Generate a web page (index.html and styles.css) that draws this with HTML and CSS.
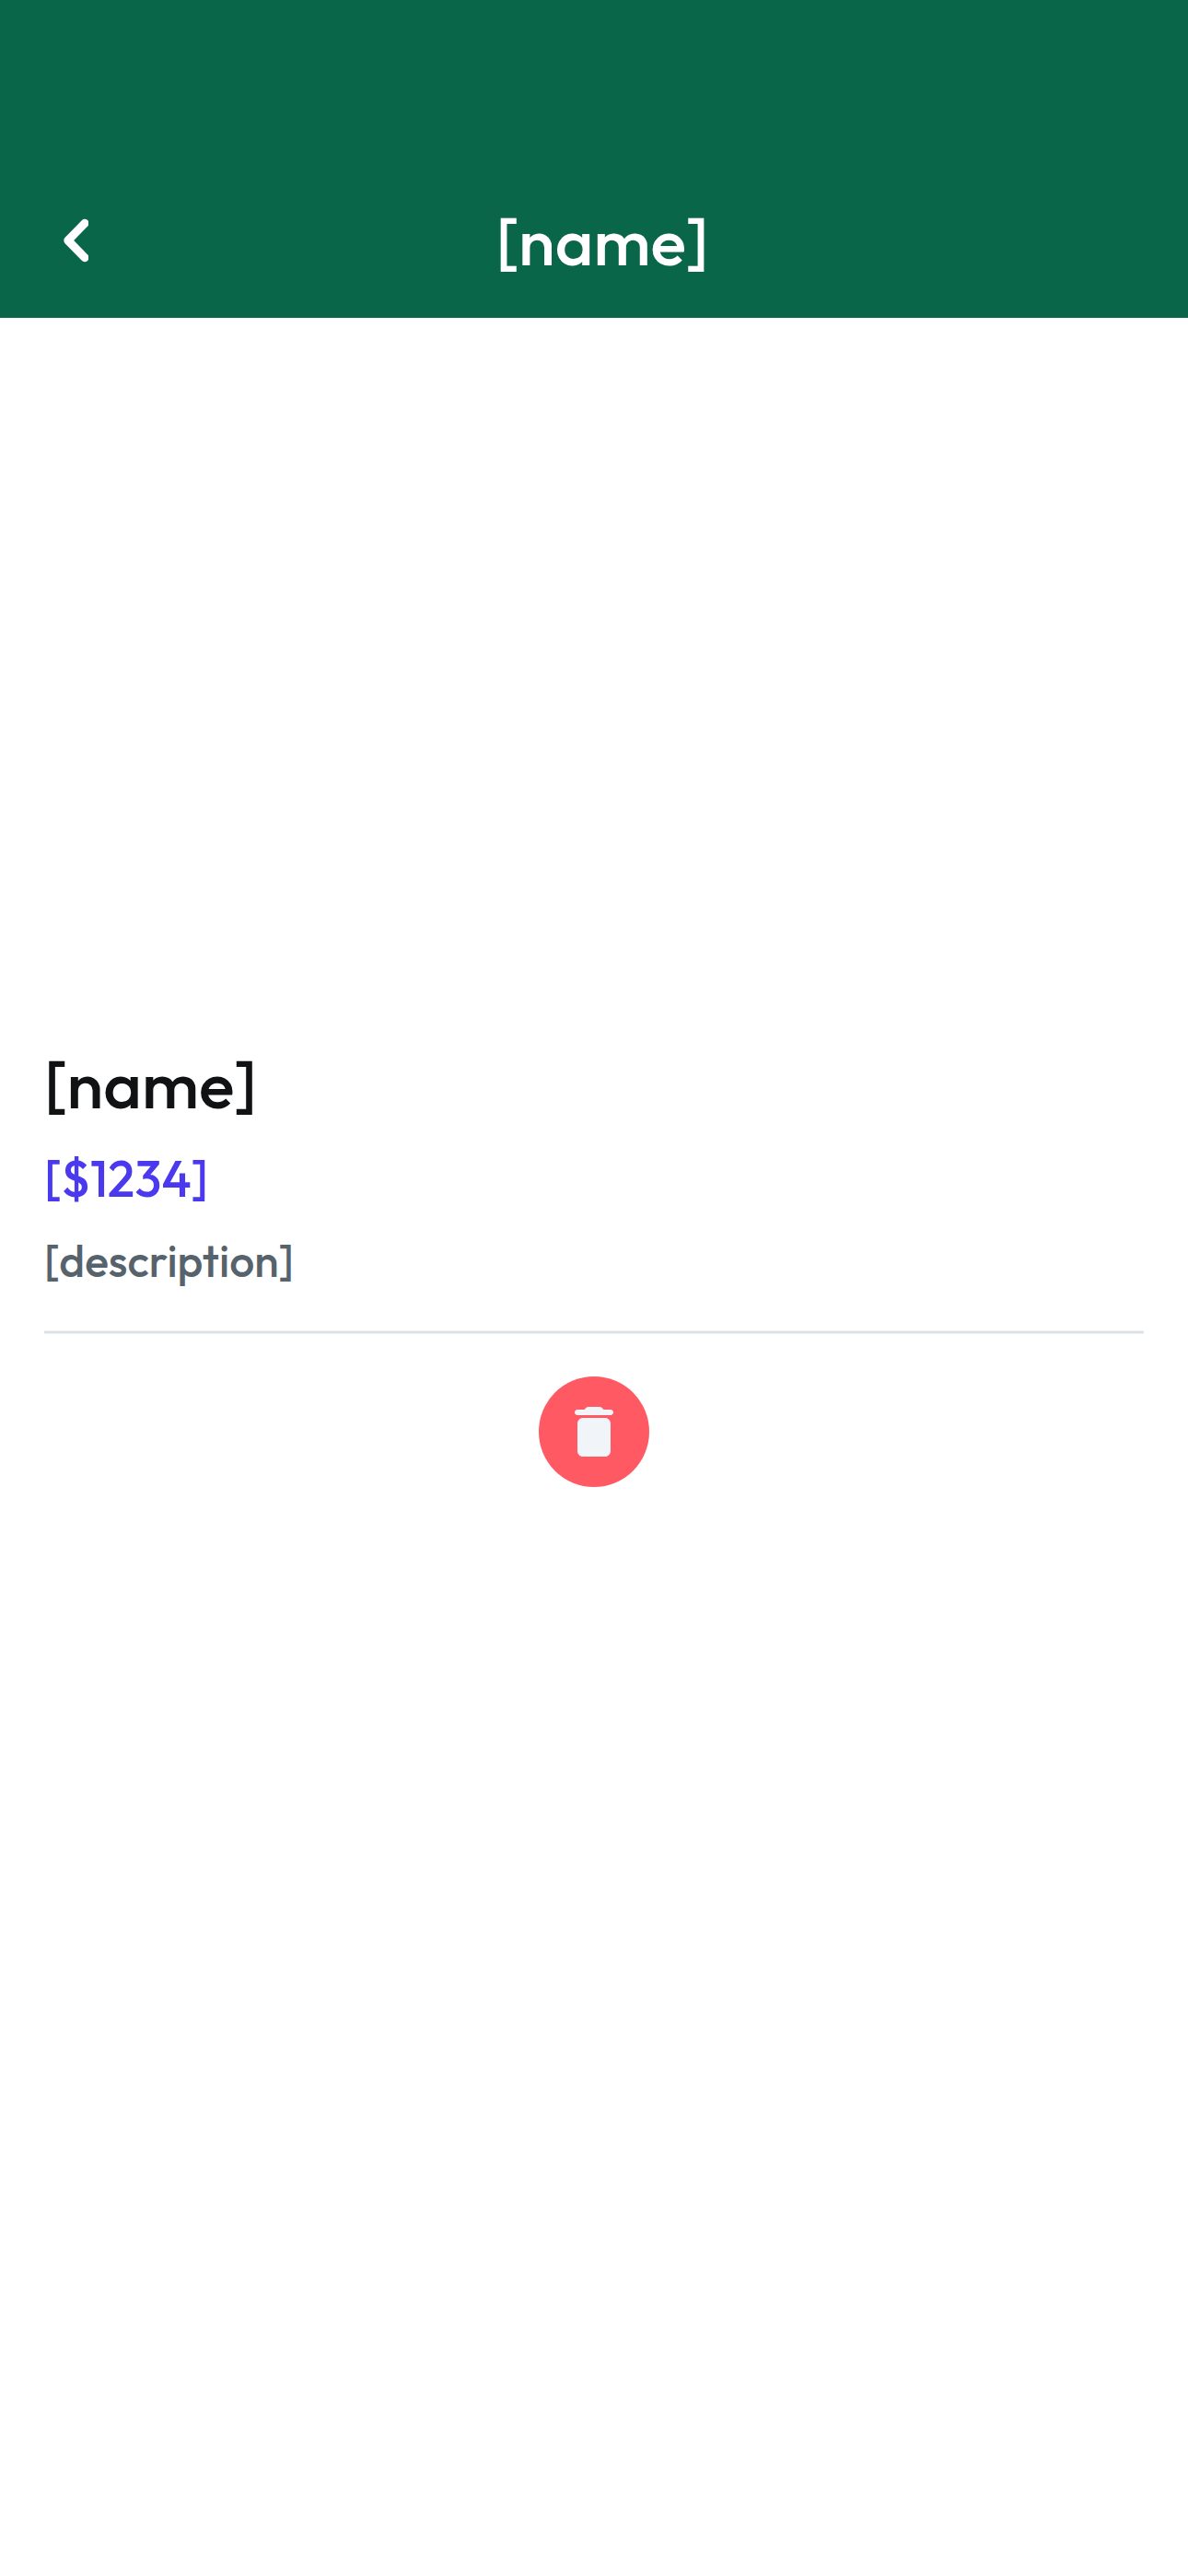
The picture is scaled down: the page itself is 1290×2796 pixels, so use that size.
FILE: index.html
```html
<!DOCTYPE html>
<html lang="en">
<head>
<meta charset="utf-8">
<title>[name]</title>
<link rel="stylesheet" href="styles.css">
</head>
<body>
<header class="bar">
  <button class="back" aria-label="Back">
    <svg viewBox="0 0 28 50"><path d="M24 6.3 5.8 25 24 43.7"/></svg>
  </button>
  <h1 class="title">[name]</h1>
</header>
<main class="content">
  <div class="photo"></div>
  <h2 class="name">[name]</h2>
  <p class="price">[$1234]</p>
  <p class="description">[description]</p>
  <hr class="divider">
  <button class="delete" aria-label="Delete">
    <svg viewBox="0 0 24 24"><path d="M6 19c0 1.1.9 2 2 2h8c1.1 0 2-.9 2-2V9c0-1.1-.9-2-2-2H8c-1.1 0-2 .9-2 2v10zM18 4h-2.5l-.71-.71c-.18-.18-.44-.29-.7-.29H9.91c-.26 0-.52.11-.7.29L8.5 4H6c-.55 0-1 .45-1 1s.45 1 1 1h12c.55 0 1-.45 1-1s-.45-1-1-1z"/></svg>
  </button>
</main>
</body>
</html>
```
FILE: styles.css
```css
* { box-sizing: border-box; margin: 0; padding: 0; }
body {
  min-height: 2796px;
  background: #fff;
  font-family: Outfit, Lato, sans-serif;
  font-weight: 500;
}
button { border: 0; background: none; }
.bar {
  display: grid;
  grid-template-columns: 150px 1fr 132px;
  align-items: center;
  height: 345px;
  padding-top: 177px;
  background: #0a6649;
}
.back { padding-left: 68px; }
.back svg { display: block; width: 28px; height: 50px; }
.back path {
  fill: none;
  stroke: #fff;
  stroke-width: 9;
  stroke-linecap: round;
  stroke-linejoin: round;
}
.title {
  padding-top: 2px;
  color: #fff;
  font-size: 72px;
  font-weight: 500;
  line-height: 90px;
  text-align: center;
}
.content {
  display: flex;
  flex-direction: column;
  padding: 0 48px;
}
.photo { height: 787px; }
.name {
  color: #101213;
  font-size: 72px;
  font-weight: 500;
  line-height: 90px;
}
.price {
  margin-top: 23px;
  color: #4b39ef;
  font-size: 54px;
  line-height: 68px;
}
.description {
  margin-top: 25px;
  color: #57636c;
  font-size: 48px;
  line-height: 60px;
}
.divider {
  height: 4px;
  margin-top: 46px;
  border: solid #edf1f3;
  border-width: 1px 0;
  background: #dbe2e7;
}
.delete {
  display: grid;
  place-items: center;
  align-self: center;
  width: 120px;
  height: 120px;
  margin-top: 46px;
  border-radius: 50%;
  background: #ff5963;
}
.delete svg { width: 72px; height: 72px; fill: #f1f4f8; }
```
